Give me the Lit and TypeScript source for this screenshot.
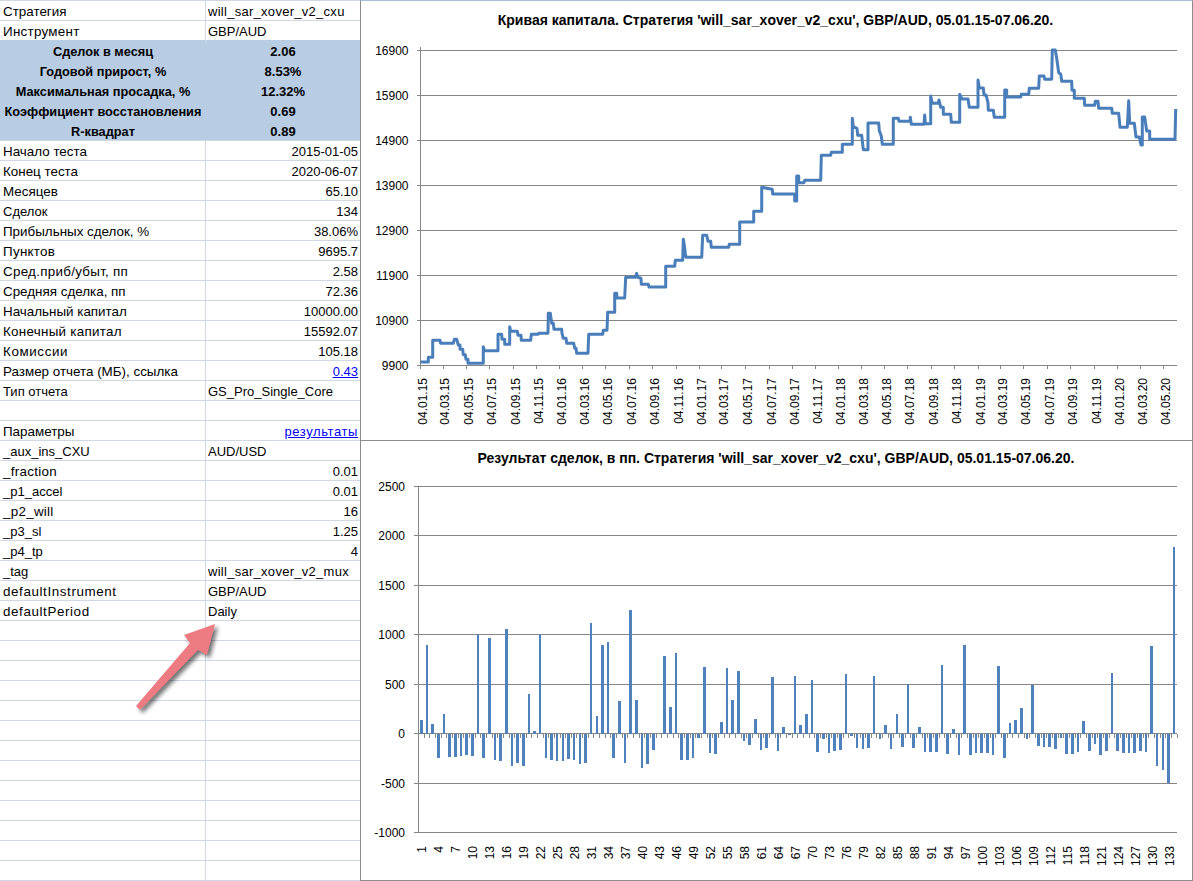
import { css, html, LitElement, svg } from "lit";
import { customElement } from "lit/decorators.js";

type Row = {
  label?: string;
  value?: string;
  right?: boolean;
  link?: boolean;
  fit?: string;
  valueFit?: string;
};

const topRows: Row[] = [
  { label: "Стратегия", value: "will_sar_xover_v2_cxu", valueFit: "loose" },
  { label: "Инструмент", value: "GBP/AUD", fit: "loose" },
];

const summaryRows: Row[] = [
  { label: "Сделок в месяц", value: "2.06" },
  { label: "Годовой прирост, %", value: "8.53%" },
  { label: "Максимальная просадка, %", value: "12.32%" },
  { label: "Коэффициент восстановления", value: "0.69" },
  { label: "R-квадрат", value: "0.89" },
];

const detailRows: Row[] = [
  { label: "Начало теста", value: "2015-01-05", right: true },
  { label: "Конец теста", value: "2020-06-07", right: true },
  { label: "Месяцев", value: "65.10", right: true },
  { label: "Сделок", value: "134", right: true, fit: "tight" },
  { label: "Прибыльных сделок, %", value: "38.06%", right: true },
  { label: "Пунктов", value: "9695.7", right: true, fit: "loose" },
  { label: "Сред.приб/убыт, пп", value: "2.58", right: true, fit: "loose" },
  { label: "Средняя сделка, пп", value: "72.36", right: true },
  { label: "Начальный капитал", value: "10000.00", right: true },
  { label: "Конечный капитал", value: "15592.07", right: true, fit: "loose" },
  { label: "Комиссии", value: "105.18", right: true, fit: "wide" },
  { label: "Размер отчета (МБ), ссылка", value: "0.43", right: true, link: true },
  { label: "Тип отчета", value: "GS_Pro_Single_Core", fit: "tight" },
  {},
  { label: "Параметры", value: "результаты", right: true, link: true, valueFit: "wide" },
  { label: "_aux_ins_CXU", value: "AUD/USD", fit: "tight" },
  { label: "_fraction", value: "0.01", right: true, fit: "loose" },
  { label: "_p1_accel", value: "0.01", right: true, fit: "tight" },
  { label: "_p2_will", value: "16", right: true, fit: "loose" },
  { label: "_p3_sl", value: "1.25", right: true, fit: "tight" },
  { label: "_p4_tp", value: "4", right: true, fit: "tight" },
  { label: "_tag", value: "will_sar_xover_v2_mux", fit: "tight", valueFit: "loose" },
  { label: "defaultInstrument", value: "GBP/AUD", fit: "wide" },
  { label: "defaultPeriod", value: "Daily", fit: "wide" },
  ...Array.from({ length: 14 }, () => ({})),
];

// equity curve, traced from the 3x crops: [x, y] pairs, left half then right half
const curveLeft = [
  182,1086, 205,1086, 205,1072, 218,1072, 218,1021, 240,1021, 242,1030, 280,1030, 283,1018, 290,1018,
  295,1035, 300,1035, 300,1048, 308,1048, 310,1064, 316,1064, 318,1078, 324,1078, 324,1090, 370,1090,
  370,1040, 373,1052, 414,1052, 414,1003, 425,1003, 426,1018, 434,1018, 434,1033, 449,1033, 449,980,
  452,994, 472,994, 474,1006, 483,1006, 484,1021, 512,1021, 514,1003, 534,1003, 536,1000, 564,1000,
  565,940, 571,940, 575,970, 580,970, 582,988, 605,988, 606,1000, 610,1015, 618,1015, 620,1030,
  641,1030, 644,1045, 648,1045, 650,1060, 684,1060, 686,1003, 728,1003, 730,991, 741,991, 743,937,
  764,937, 764,880, 770,880, 771,894, 794,894, 795,875, 797,832, 826,832, 830,820, 833,832,
  843,835, 844,853, 865,853, 867,861, 917,861, 917,799, 944,799, 946,781, 968,781, 970,718,
  973,735, 976,760, 978,772, 1025,772, 1028,706, 1040,706, 1044,724, 1052,724, 1054,742, 1106,742,
  1108,733, 1139,733, 1139,666, 1181,666, 1181,634, 1205,634, 1205,562, 1220,565, 1237,568, 1238,582,
  1260,582,
];
const curveRight = [
  44,582, 44,603, 50,603, 50,528, 56,528, 56,548, 72,548, 74,541, 122,541, 124,466,
  152,466, 154,457, 187,457, 187,433, 217,433, 217,355, 220,380, 231,385, 233,406, 245,406,
  250,449, 264,449, 264,369, 296,369, 298,392, 304,408, 307,433, 340,433, 340,355, 355,355,
  357,364, 391,364, 391,352, 394,373, 432,373, 434,345, 436,371, 452,371, 452,288, 457,310,
  474,310, 477,300, 482,322, 490,322, 490,343, 512,343, 514,367, 539,367, 539,283, 546,297,
  564,297, 568,322, 594,322, 594,240, 598,264, 610,264, 612,285, 618,285, 624,308, 625,331,
  640,331, 643,352, 674,352, 674,270, 680,270, 680,291, 722,291, 724,283, 746,283, 748,265,
  776,265, 778,228, 792,228, 794,238, 815,238, 817,150, 826,150, 830,175, 836,218, 842,222,
  845,244, 875,244, 876,271, 883,271, 883,295, 913,295, 914,316, 944,316, 946,304, 954,304,
  956,325, 995,325, 997,340, 1016,340, 1020,382, 1042,382, 1046,302, 1049,370, 1063,370, 1068,411,
  1078,411, 1083,435, 1087,435, 1087,351, 1094,351, 1100,393, 1109,393, 1109,418, 1185,418, 1187,327,
];

function tracePoints(list: number[], originX: number) {
  const out: string[] = [];
  for (let i = 0; i < list.length; i += 2) {
    out.push(`${(originX + list[i] / 3).toFixed(1)},${(list[i + 1] / 3).toFixed(1)}`);
  }
  return out.join(" ");
}

const dateTicks = [
  420.5, 443.3, 466.5, 489.5, 513.5, 536.5, 559.5, 582.5, 605.5, 629.5, 652.5, 676.5, 699.5, 721.5, 745.5, 769.5,
  792.5, 815.5, 838.5, 861.5, 884.5, 907.5, 931.5, 954.5, 978.5, 1000.5, 1023.5, 1047.5, 1070.5, 1094.5, 1117.5,
  1140.5, 1163.5,
];
const months = ["01", "03", "05", "07", "09", "11"];
const dateLabels = dateTicks.map((_, i) => {
  const year = 15 + Math.floor(i / 6);
  return `04.${months[i % 6]}.${year}`;
});

const equityGrid = [16900, 15900, 14900, 13900, 12900, 11900, 10900, 9900];
const tradeGrid = [2500, 2000, 1500, 1000, 500, 0, -500, -1000];
const tradeGridY = [486.5, 535.5, 585.5, 634.5, 684.5, 733.5, 783.5, 832.5];

const trades = [
  134, 889, 94, -248, 201, -238, -238, -228, -218, -228,
  1000, -248, 960, -268, -278, 1050, -328, -298, -328, 396,
  23, 1000, -248, -268, -278, -278, -258, -268, -308, -298,
  1110, 174, 889, 920, -248, 325, -298, 1242, 335, -348,
  -308, -168, -10, 778, 265, 809, -268, -268, -248, -47,
  668, -198, -208, 114, 658, 335, 627, -77, -117, 144,
  -168, -148, 567, -178, 64, -20, 577, 84, 201, 537,
  -188, -57, -198, -178, -168, 597, -27, -148, -158, -148,
  577, -57, 84, -158, 201, -138, 500, -148, 64, -188,
  -188, -188, 688, -208, 43, -218, 889, -218, -198, -198,
  -198, -218, 678, -248, 104, 134, 255, -57, 487, -128,
  -138, -138, -158, -47, -208, -208, -188, 124, -178, -107,
  -218, -178, 607, -178, -198, -198, -198, -178, -188, 879,
  -328, -368, -500, 1876,
];

const AXIS_LEFT = 418.5;
const PLOT_RIGHT = 1177;
const STEP = (PLOT_RIGHT - AXIS_LEFT) / trades.length;

@customElement("app-root")
export class AppRoot extends LitElement {
  static styles = css`
    :host {
      display: block;
      position: relative;
      width: 1193px;
      height: 881px;
      overflow: hidden;
      background: #fff;
      font-family: "Liberation Sans", Arial, sans-serif;
      color: #000;
    }

    .sheet {
      display: flex;
      height: 881px;
    }

    .table {
      width: 360px;
      flex: none;
      font-size: 13px;
    }

    .row {
      display: grid;
      grid-template-columns: 206px 154px;
      height: 20px;
      box-sizing: border-box;
      border-top: 1px solid #d0d7e5;
      line-height: 22px;
    }

    .row > div {
      white-space: nowrap;
      padding: 0 2px;
    }

    .row > .name {
      padding-left: 3px;
      font-size: 13.4px;
      border-right: 1px solid #d0d7e5;
    }

    .row .right {
      text-align: right;
    }

    .row .name.tight {
      font-size: 13px;
    }

    .row .loose {
      letter-spacing: 0.28px;
    }

    .row .wide {
      letter-spacing: 0.6px;
    }

    .row a {
      color: #0000ff;
      text-decoration: underline;
    }

    .row.summary {
      background: #b8cce4;
      border-top: 0;
      font-weight: bold;
      text-align: center;
      line-height: 24px;
    }

    .row.summary > div {
      padding: 0;
      border: 0;
    }

    .row.summary > .name {
      font-size: 12.75px;
    }

    .charts {
      width: 833px;
      flex: none;
      display: flex;
      flex-direction: column;
    }

    .chart {
      box-sizing: border-box;
      width: 833px;
      height: 440px;
      border: 1px solid #8c8c8c;
      border-top: 0;
    }

    .chart.first {
      height: 441px;
      border-top: 1px solid #a7bfdc;
    }

    .chart svg {
      display: block;
    }

    .grid {
      stroke: #868686;
      stroke-width: 1;
      shape-rendering: crispEdges;
    }

    .curve {
      fill: none;
      stroke: #4a7ebb;
      stroke-width: 3;
      stroke-linejoin: round;
    }

    .bar {
      fill: #4f81bd;
      shape-rendering: crispEdges;
    }

    .title {
      font-size: 14px;
      font-weight: bold;
      text-anchor: middle;
    }

    .num {
      font-size: 12px;
      text-anchor: end;
    }

    .arrow {
      position: absolute;
      left: 120px;
      top: 610px;
      filter: drop-shadow(3px 3px 2px rgba(0, 0, 0, 0.55));
    }
  `;

  renderRow(row: Row) {
    return html`
      <div class="row">
        <div class="name ${row.fit ?? ""}">${row.label}</div>
        <div class="${row.right ? "right" : ""} ${row.valueFit ?? ""}">
          ${row.link ? html`<a href="#">${row.value}</a>` : row.value}
        </div>
      </div>
    `;
  }

  renderEquity() {
    return svg`
      <text class="title" x="775.5" y="25">Кривая капитала. Стратегия 'will_sar_xover_v2_cxu', GBP/AUD, 05.01.15-07.06.20.</text>
      ${equityGrid.map((v, i) => {
        const y = 50.5 + i * 45;
        return svg`
          <line class="grid" x1="417" x2=${PLOT_RIGHT} y1=${y} y2=${y}></line>
          <text class="num" x="408.5" y=${y + 4.5}>${v}</text>
        `;
      })}
      <line class="grid" x1="420.5" x2="420.5" y1="47" y2="366"></line>
      ${dateTicks.map(
        (x, i) => svg`
          <line class="grid" x1=${x} x2=${x} y1="365" y2="369"></line>
          <text class="num" transform="translate(${x + 6} 378) rotate(-90)">${dateLabels[i]}</text>
        `
      )}
      <polyline class="curve" points="${tracePoints(curveLeft, 360)} ${tracePoints(curveRight, 780)}"></polyline>
    `;
  }

  renderTrades() {
    const zero = 733.5;
    return svg`
      <text class="title" x="776" y="463">Результат сделок, в пп. Стратегия 'will_sar_xover_v2_cxu', GBP/AUD, 05.01.15-07.06.20.</text>
      ${tradeGrid.map(
        (v, i) => svg`
          <line class="grid" x1="414" x2=${PLOT_RIGHT} y1=${tradeGridY[i]} y2=${tradeGridY[i]}></line>
          <text class="num" x="405" y=${tradeGridY[i] + 4.5}>${v}</text>
        `
      )}
      <line class="grid" x1=${AXIS_LEFT} x2=${AXIS_LEFT} y1="486" y2="833"></line>
      ${trades.map((_, i) => {
        const x = AXIS_LEFT + STEP * (i + 1);
        return svg`<line class="grid" x1=${x} x2=${x} y1=${zero} y2="738"></line>`;
      })}
      ${trades.map((v, i) => {
        const center = AXIS_LEFT + STEP * (i + 0.5);
        const h = Math.abs(v) * 0.0993;
        return svg`<rect class="bar" x=${center - 1.3} width="2.6" y=${v > 0 ? zero - h : zero} height=${h}></rect>`;
      })}
      ${trades.map((_, i) => {
        if (i % 3 !== 0) return null;
        const center = AXIS_LEFT + STEP * (i + 0.5);
        return svg`<text class="num" transform="translate(${center + 5} 846) rotate(-90)">${i + 1}</text>`;
      })}
    `;
  }

  render() {
    return html`
      <div class="sheet">
        <div class="table">
          ${topRows.map((r) => this.renderRow(r))}
          ${summaryRows.map(
            (r) => html`<div class="row summary"><div class="name">${r.label}</div><div>${r.value}</div></div>`
          )}
          ${detailRows.map((r) => this.renderRow(r))}
        </div>
        <div class="charts">
          <div class="chart first">
            <svg width="831" height="439" viewBox="361 1 831 439">${this.renderEquity()}</svg>
          </div>
          <div class="chart">
            <svg width="831" height="439" viewBox="361 441 831 439">${this.renderTrades()}</svg>
          </div>
        </div>
      </div>
      <svg class="arrow" width="110" height="110" viewBox="120 610 110 110">
        <polygon fill="#ee7a82" points="136,706 190,643 184,635 215,624 207,655 198,650 140,710"></polygon>
      </svg>
    `;
  }
}
